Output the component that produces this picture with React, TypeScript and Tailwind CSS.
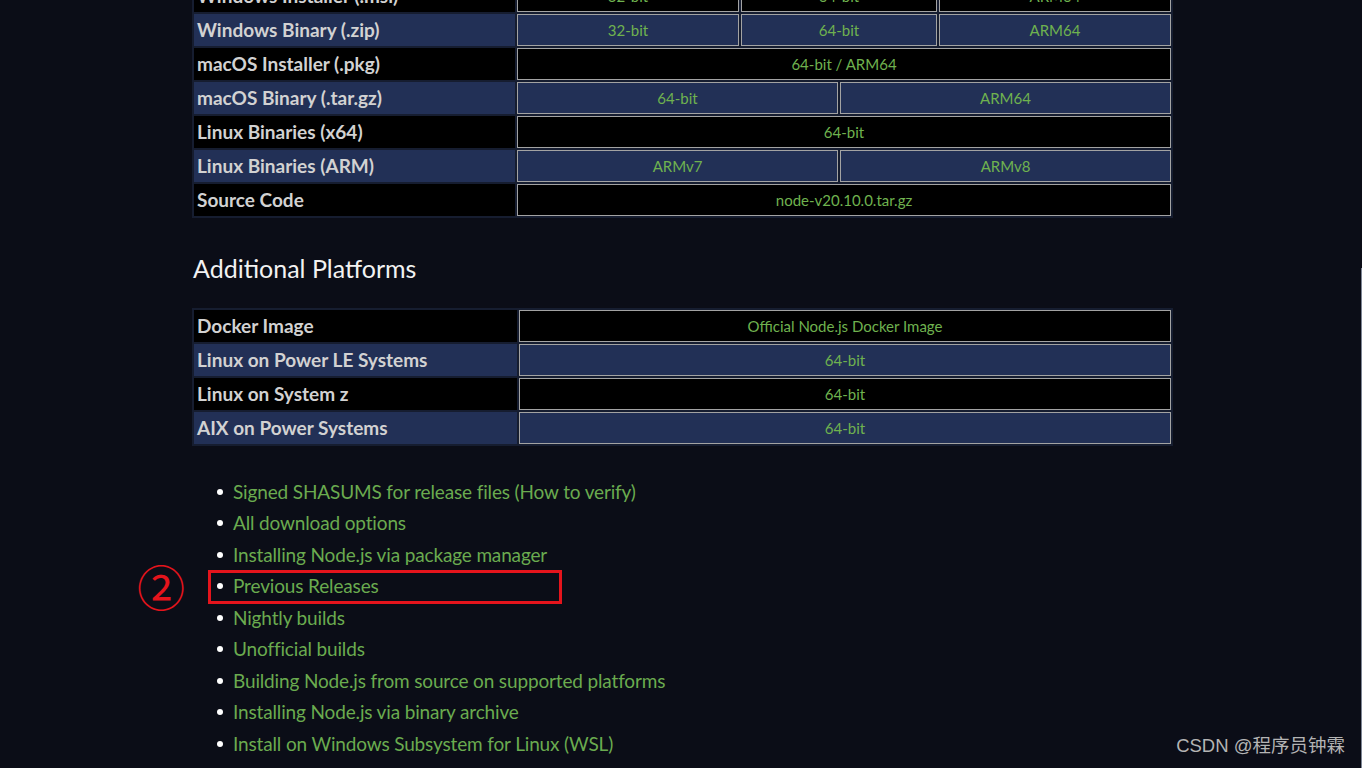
import React from "react";

type Cell = { label: string; w?: string };
type Row = { name: string; cells: Cell[]; navy: boolean };

const mainRows: Row[] = [
  { name: "Windows Installer (.msi)", navy: false, cells: [{ label: "32-bit", w: "w-[222px]" }, { label: "64-bit", w: "w-[196px]" }, { label: "ARM64" }] },
  { name: "Windows Binary (.zip)", navy: true, cells: [{ label: "32-bit", w: "w-[222px]" }, { label: "64-bit", w: "w-[196px]" }, { label: "ARM64" }] },
  { name: "macOS Installer (.pkg)", navy: false, cells: [{ label: "64-bit / ARM64" }] },
  { name: "macOS Binary (.tar.gz)", navy: true, cells: [{ label: "64-bit", w: "w-[321px]" }, { label: "ARM64" }] },
  { name: "Linux Binaries (x64)", navy: false, cells: [{ label: "64-bit" }] },
  { name: "Linux Binaries (ARM)", navy: true, cells: [{ label: "ARMv7", w: "w-[321px]" }, { label: "ARMv8" }] },
  { name: "Source Code", navy: false, cells: [{ label: "node-v20.10.0.tar.gz" }] },
];

const extraRows: Row[] = [
  { name: "Docker Image", navy: false, cells: [{ label: "Official Node.js Docker Image" }] },
  { name: "Linux on Power LE Systems", navy: true, cells: [{ label: "64-bit" }] },
  { name: "Linux on System z", navy: false, cells: [{ label: "64-bit" }] },
  { name: "AIX on Power Systems", navy: true, cells: [{ label: "64-bit" }] },
];

const links = [
  "Signed SHASUMS for release files (How to verify)",
  "All download options",
  "Installing Node.js via package manager",
  "Previous Releases",
  "Nightly builds",
  "Unofficial builds",
  "Building Node.js from source on supported platforms",
  "Installing Node.js via binary archive",
  "Install on Windows Subsystem for Linux (WSL)",
];

function DownloadTable({ rows, head }: { rows: Row[]; head: string }) {
  return (
    <div className="flex flex-col gap-[2px] bg-[#161d30] p-[2px]">
      {rows.map((row) => {
        const bg = row.navy ? "bg-[#223056]" : "bg-black";
        return (
          <div key={row.name} className="flex h-[32px] gap-[2px]">
            <div className={`${head} ${bg} flex shrink-0 items-center pl-[3px] text-[19px] font-bold text-[#d2d2d2]`}>
              {row.name}
            </div>
            {row.cells.map((cell) => (
              <div
                key={cell.label}
                className={`${cell.w ?? "flex-1"} ${bg} flex shrink-0 items-center justify-center border border-[#a3a3a3] text-[15px] text-[#6fb24f]`}
              >
                {cell.label}
              </div>
            ))}
          </div>
        );
      })}
    </div>
  );
}

export default function App() {
  return (
    <div className="relative h-[768px] overflow-hidden bg-[#0b0d17] font-['Lato','Noto_Sans',sans-serif]">
      <div className="ml-[192px] w-[981px]">
        <div className="-mt-[22px]">
          <DownloadTable rows={mainRows} head="w-[321px]" />
        </div>

        <h2 className="ml-px mt-[34px] h-[32px] text-[25px] leading-[32px] text-[#f2f2f2]">Additional Platforms</h2>

        <div className="mt-[24px]">
          <DownloadTable rows={extraRows} head="w-[323px]" />
        </div>

        <ul className="mt-[30px] pl-[25px]">
          {links.map((text) => (
            <li key={text} className="relative flex h-[31.5px] items-center gap-[10px] text-[19px] tracking-[-0.15px] text-[#6aab4f]">
              <span className="h-[6px] w-[6px] shrink-0 rounded-full bg-white" />
              <span>{text}</span>
              {text === "Previous Releases" && (
                <>
                  <span className="absolute left-[-9px] top-[-1px] h-[34px] w-[354px] border-[3px] border-[#e5141c]" />
                  <span className="absolute left-[-80px] top-[-15px] text-[48px] leading-[58px] text-[#e5141c] font-['Noto_Sans_CJK_SC',sans-serif]">
                    ②
                  </span>
                </>
              )}
            </li>
          ))}
        </ul>
      </div>

      <div className="absolute right-0 top-[268px] h-[500px] w-px bg-[#7d8594]" />

      <div className="absolute bottom-[8px] right-[17px] text-[18.5px] text-[#b4b4b4] font-['Liberation_Sans','Noto_Sans_CJK_SC',sans-serif]">
        CSDN @程序员钟霖
      </div>
    </div>
  );
}
